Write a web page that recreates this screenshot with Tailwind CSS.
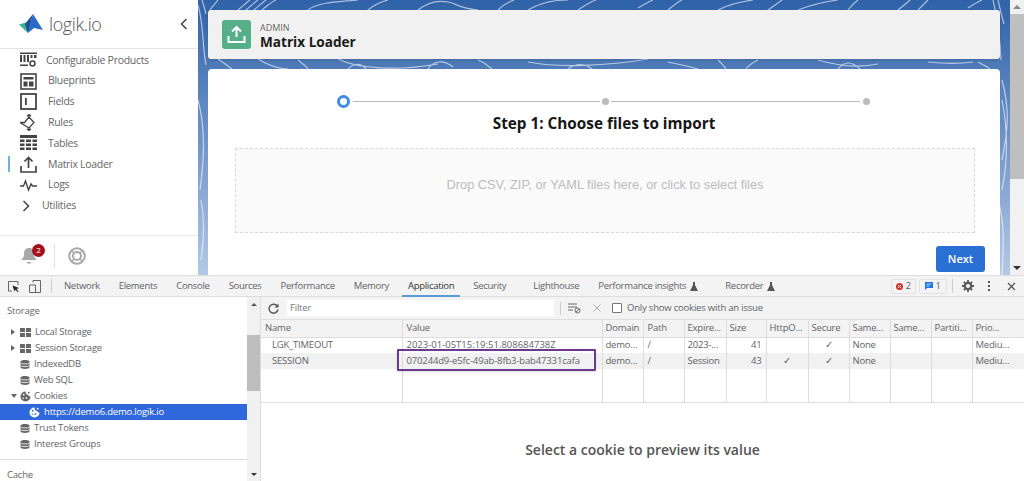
<!DOCTYPE html>
<html>
<head>
	<meta charset="utf-8">
	<title>Matrix Loader</title>
	<script src="https://cdn.jsdelivr.net/npm/@tailwindcss/browser@4"></script>
</head>
<body class="w-[1024px] h-[481px] overflow-hidden bg-white font-['Open_Sans',sans-serif]">
	<svg class="hidden">
		<symbol id="db" viewBox="0 0 10 10"><path d="M.5 2.200c0-2.300 9-2.300 9 0v5.600c0 2.300-9 2.300-9 0z" fill="#666"/><path d="M.5 3.600c1.500 1.200 7.500 1.200 9 0M.5 6.200c1.500 1.200 7.500 1.200 9 0" stroke="#fff" fill="none" stroke-width=".8"/></symbol>
		<symbol id="cookie" viewBox="0 0 12 12"><path d="M6 .5a5.500 5.500 0 1 0 5.500 5.500c-1.500.3-2.500-.5-2.700-1.800C7.300 4.200 6 3 6 .5z" fill="currentColor"/><circle cx="4" cy="4" r="1" fill="var(--hole)"/><circle cx="7" cy="7.500" r="1" fill="var(--hole)"/><circle cx="3.500" cy="8" r=".8" fill="var(--hole)"/><circle cx="9.500" cy="1.800" r="1" fill="currentColor"/></symbol>
	</svg>

	<!-- app -->
	<div class="flex h-[275px]">
		<aside class="w-[198px] shrink-0 flex flex-col bg-white">
			<div class="h-[49px] shrink-0 flex items-center pl-[19px] pr-[10px] border-b border-[#e4e4e4]">
				<svg class="w-[24px] h-[20px]" viewBox="0 0 24 20">
					<path d="M0 10.500 12 7 9 19z" fill="#35b58f"/>
					<path d="M14 0 24 16 15 14 9 19z" fill="#2a6cc9"/>
					<path d="M14 0 9 19 6 10z" fill="#1d4f96"/>
				</svg>
				<span class="ml-[6px] text-[18px] font-light text-[#555] tracking-[-0.4px]">logik.io</span>
				<svg class="ml-auto w-[8px] h-[12px]" viewBox="0 0 8 12"><path d="M6.500 1 1.500 6l5 5" fill="none" stroke="#444" stroke-width="1.500"/></svg>
			</div>
			<nav class="flex-1 relative pt-[1px] text-[10.5px] tracking-[-0.3px] text-[#666]">
				<div class="h-[20.8px] flex items-center pl-[20px]">
					<svg class="w-[17px] h-[17px] shrink-0" viewBox="0 0 17 17"><path d="M0 .5h17v1.500H0zM0 3h2v7H0zM3.500 3h2v7h-2zM7 3h2v7H7zM10.500 3h2v3h-2zM14 3h2.500v3H14zM0 12.500h8V14H0z" fill="#444"/><circle cx="12.500" cy="11.500" r="2.500" fill="none" stroke="#444" stroke-width="1.500"/></svg>
					<span class="ml-[9px]">Configurable Products</span>
				</div>
				<div class="h-[20.8px] flex items-center pl-[20px]">
					<svg class="w-[17px] h-[17px] shrink-0" viewBox="0 0 17 17"><rect x="1" y="1" width="15" height="15" fill="none" stroke="#444" stroke-width="1.600"/><path d="M3.500 4h10v2.500h-10zM3.500 8.500h4v5h-4zM9 8.500h4.500v5H9z" fill="#444"/></svg>
					<span class="ml-[11px]">Blueprints</span>
				</div>
				<div class="h-[20.8px] flex items-center pl-[20px]">
					<svg class="w-[17px] h-[17px] shrink-0" viewBox="0 0 17 17"><rect x="1" y="1" width="15" height="15" fill="none" stroke="#444" stroke-width="1.800"/><path d="M5 5h1.800v7H5z" fill="#444"/></svg>
					<span class="ml-[11px]">Fields</span>
				</div>
				<div class="h-[20.8px] flex items-center pl-[20px]">
					<svg class="w-[17px] h-[17px] shrink-0" viewBox="0 0 17 17"><path d="M0 8.500h4.500L9 3l5 5.500L9 14zM9 3V.5M7 2.200 9 .5l2 1.700M9 14v2.500M7 14.800 9 16.500l2-1.700" fill="none" stroke="#444" stroke-width="1.300"/></svg>
					<span class="ml-[11px]">Rules</span>
				</div>
				<div class="h-[20.8px] flex items-center pl-[20px]">
					<svg class="w-[17px] h-[17px] shrink-0" viewBox="0 0 17 17"><path d="M0 0h17v3H0zM0 4.500h4.500V7H0zM6 4.500h5V7H6zM12.500 4.500H17V7h-4.500zM0 8.500h4.500V11H0zM6 8.500h5V11H6zM12.500 8.500H17V11h-4.500zM0 12.500h4.500V15H0zM6 12.500h5V15H6zM12.500 12.500H17V15h-4.500z" fill="#444"/></svg>
					<span class="ml-[11px]">Tables</span>
				</div>
				<div class="h-[20.8px] flex items-center pl-[20px] relative">
					<div class="absolute left-[8px] top-[2px] w-[2px] h-[16px] bg-[#6fb1e0]"></div>
					<svg class="w-[17px] h-[17px] shrink-0" viewBox="0 0 17 17"><path d="M8.500 12V2M4.500 5.500l4-4 4 4M1 10v6h15v-6" fill="none" stroke="#444" stroke-width="1.700"/></svg>
					<span class="ml-[11px]">Matrix Loader</span>
				</div>
				<div class="h-[20.8px] flex items-center pl-[20px]">
					<svg class="w-[17px] h-[17px] shrink-0" viewBox="0 0 17 17"><path d="M0 9h3.500l2-5 3 9 2.500-6 1.500 2H17" fill="none" stroke="#444" stroke-width="1.400"/></svg>
					<span class="ml-[11px]">Logs</span>
				</div>
				<div class="h-[20.8px] flex items-center pl-[22px]">
					<svg class="w-[8px] h-[12px] shrink-0" viewBox="0 0 8 12"><path d="M1.500 1 6.500 6l-5 5" fill="none" stroke="#444" stroke-width="1.500"/></svg>
					<span class="ml-[12px]">Utilities</span>
				</div>
			</nav>
			<div class="h-[40px] shrink-0 flex items-center border-t border-[#e8e8e8] pl-[20px]">
				<div class="relative w-[18px] h-[18px]">
					<svg class="w-[18px] h-[18px]" viewBox="0 0 18 18"><path d="M9 1c3.500 0 5 2.500 5 6 0 3 1 4.500 3 6H1c2-1.500 3-3 3-6 0-3.500 1.500-6 5-6z" fill="#a9a9a9"/><path d="M7 15h4v1.500H7z" fill="#a9a9a9"/></svg>
					<div class="absolute left-[12px] top-[-3px] w-[13px] h-[13px] rounded-full bg-[#a5101f] text-white text-[8px] flex items-center justify-center">2</div>
				</div>
				<div class="ml-[16px] w-px h-[24px] bg-[#e0e0e0]"></div>
				<svg class="ml-[13px] w-[18px] h-[18px]" viewBox="0 0 18 18"><circle cx="9" cy="9" r="7.800" fill="none" stroke="#aaa" stroke-width="2"/><circle cx="9" cy="9" r="4" fill="none" stroke="#aaa" stroke-width="2"/><path d="M3.500 3.500l2.500 2.500M14.500 3.500 12 6M3.500 14.500 6 12M14.500 14.500 12 12" stroke="#aaa" stroke-width="1.500"/></svg>
			</div>
		</aside>

		<main class="relative flex-1 overflow-hidden bg-gradient-to-b from-[#2f62a8] via-[#6f93c8] to-[#b4c8e4] px-[10px] pt-[10px]">
			<svg class="absolute inset-0 w-full h-full" viewBox="0 0 812 275" fill="none" stroke="#fff" stroke-opacity=".6" stroke-width="1.200">
				<path d="M0 5c6 20 4 40 8 60M4 0c2 6 3 10 4 14M20 0c-3 4-6 7-8 10M40 10c5-4 9-8 12-10M48 10c5-4 9-8 12-10M56 10c5-4 9-8 12-10M64 10c5-4 9-8 14-10M110 10c10-8 30-8 50-10M170 10c6-5 12-8 20-10M220 10c10-8 20-10 30-8s10 6 30 8M300 10c6-6 10-8 16-10M330 10c10-6 25-10 40-10M380 10c6-4 12-8 18-10M440 8c5-3 10-6 15-8M470 10c6-5 10-8 14-10M520 10c10-5 20-8 35-10M570 10c6-4 10-7 14-10M600 10c10-4 25-8 40-10M650 10c3-4 6-7 10-10M700 10c5-4 10-8 12-10M720 10c4-4 8-8 10-10M770 8c5-4 10-6 14-8M795 0c3 15 6 20 8 60M800 0c2 8 3 14 6 24"/>
				<path d="M20 59c6 4 10 7 14 10M60 59c10 6 20 10 30 10M100 60c4 3 8 6 10 9M140 59c20 10 60 12 100 5M150 69c5-5 12-7 18 0M230 69c5-8 15-10 25-2M280 60c6 2 10 6 14 9M330 62c30 6 80 4 120-3M370 69c8-6 16-6 24 0M470 62c10 2 20 4 30 7M520 60c4 3 6 6 8 9M560 60c-8 4-10 6-12 9M620 60c20 6 40 8 60 4M640 69c6-8 14-8 22 0M730 62c20 2 30 2 45 0M780 62c8 4 12 6 20 15"/>
				<path d="M0 100c8 30 6 60 2 90M3 200c4 20 3 40 0 60M804 80c8 30 6 50 0 80M804 100c6 30 6 60 0 90M800 200c6 20 6 40 4 75"/>
			</svg>
			<div class="relative h-[49px] rounded-[3px] bg-[#f2f1f1] flex items-center pl-[14px] shadow-sm">
				<div class="w-[29px] h-[29px] rounded-[3px] bg-[#55b089] flex items-center justify-center">
					<svg class="w-[19px] h-[19px]" viewBox="0 0 19 19"><path d="M9.500 12V2.500M5 6.500l4.500-4.500 4.500 4.500M1.500 11v6h16v-6" fill="none" stroke="#fff" stroke-width="2"/></svg>
				</div>
				<div class="ml-[9px] pt-[2px]">
					<div class="text-[9px] leading-[11px] text-[#666]">ADMIN</div>
					<div class="text-[13.600px] leading-[17px] font-bold text-[#1a1a1a]">Matrix Loader</div>
				</div>
			</div>
			<div class="relative mt-[10px] h-[300px] rounded-t-[4px] bg-white">
				<div class="relative h-[64px]">
					<div class="absolute left-[129px] top-[26px] w-[13px] h-[13px] rounded-full border-[3px] border-[#3f8bea] bg-white"></div>
					<div class="absolute left-[145px] top-[32px] w-[247px] h-px bg-[#bbb]"></div>
					<div class="absolute left-[394px] top-[29px] w-[7px] h-[7px] rounded-full bg-[#bcbcbc]"></div>
					<div class="absolute left-[403px] top-[32px] w-[249px] h-px bg-[#bbb]"></div>
					<div class="absolute left-[655px] top-[29px] w-[7px] h-[7px] rounded-full bg-[#bcbcbc]"></div>
					<div class="absolute left-0 right-0 top-[43px] text-center text-[15.300px] leading-[22px] font-bold text-[#161616]">Step 1: Choose files to import</div>
				</div>
				<div class="ml-[27px] mt-[15px] w-[740px] h-[85px] pb-[12px] border border-dashed border-[#d8d8d8] bg-[#fafafa] flex items-center justify-center font-['Liberation_Sans',sans-serif] text-[12.800px] text-[#bcbcbc]">Drop CSV, ZIP, or YAML files here, or click to select files</div>
				<div class="ml-[728px] mt-[13px] w-[49px] h-[26px] rounded-[3px] bg-[#2a70d4] text-white text-[11px] font-semibold flex items-center justify-center">Next</div>
			</div>
		</main>

		<div class="w-[14px] shrink-0 bg-[#f1f1f1] flex flex-col items-center">
			<div class="h-[14px] flex items-center"><div class="w-0 h-0 border-x-[4px] border-x-transparent border-b-[4px] border-b-[#888]"></div></div>
			<div class="w-full h-[165px] bg-[#bfbfbf]"></div>
			<div class="mt-auto h-[14px] flex items-center"><div class="w-0 h-0 border-x-[4px] border-x-transparent border-t-[4px] border-t-[#333]"></div></div>
		</div>
	</div>

	<!-- devtools -->
	<div class="h-[206px] border-t border-[#ddd] text-[9.500px] tracking-[-0.2px] text-[#5f6368] flex flex-col">
		<div class="h-[21px] shrink-0 bg-[#f3f3f3] border-b border-[#ddd] flex items-center relative">
			<svg class="ml-[8px] w-[11px] h-[11px]" viewBox="0 0 11 11"><path d="M4 10H.5V.5H10V4" fill="none" stroke="#666"/><path d="M4.500 4.500 11 7 8.500 8 10.500 10.500 9.500 11 7.500 8.500 6.500 10.500z" fill="#222"/></svg>
			<svg class="ml-[10px] w-[12px] h-[13px]" viewBox="0 0 12 13"><path d="M4 2.500V.5h7.500v12H.5V5h6v7.500" fill="none" stroke="#666"/></svg>
			<div class="ml-[10px] w-px h-[14px] bg-[#ccc]"></div>
			<div class="ml-[12px] flex gap-[19px] h-full items-center pt-[1px] tracking-[-0.3px]">
				<span>Network</span><span>Elements</span><span>Console</span><span>Sources</span><span>Performance</span><span>Memory</span>
				<span class="relative h-full flex items-center text-[#333]">Application<span class="absolute left-[-6px] right-[-6px] bottom-[-1px] h-[2px] bg-[#5b9bd5]"></span></span>
				<span>Security</span><span class="ml-[8px]">Lighthouse</span>
				<span class="flex items-center gap-[4px]">Performance insights <svg class="w-[8px] h-[9px]" viewBox="0 0 8 9"><path d="M3 0h2v3l3 6H0l3-6z" fill="#555"/></svg></span>
				<span class="flex items-center gap-[4px] ml-[8px]">Recorder <svg class="w-[8px] h-[9px]" viewBox="0 0 8 9"><path d="M3 0h2v3l3 6H0l3-6z" fill="#555"/></svg></span>
			</div>
			<div class="ml-auto flex items-center pr-[8px]">
				<div class="w-[25px] h-[15px] border border-[#e2e2e2] rounded-[2px] flex items-center justify-center gap-[2px]">
					<svg class="w-[7px] h-[7px]" viewBox="0 0 7 7"><circle cx="3.500" cy="3.500" r="3.500" fill="#d93025"/><path d="M2 2l3 3M5 2 2 5" stroke="#fff" stroke-width=".9"/></svg>
					<span>2</span>
				</div>
				<div class="ml-[3px] w-[28px] h-[15px] border border-[#e2e2e2] rounded-[2px] flex items-center justify-center gap-[2px]">
					<svg class="w-[8px] h-[8px]" viewBox="0 0 8 8"><path d="M0 0h8v6H2L0 8z" fill="#1a73e8"/><path d="M1.500 2h5M1.500 4h3" stroke="#fff" stroke-width=".7"/></svg>
					<span>1</span>
				</div>
				<div class="ml-[5px] w-px h-[14px] bg-[#ccc]"></div>
				<svg class="ml-[9px] w-[12px] h-[12px]" viewBox="0 0 12 12"><circle cx="6" cy="6" r="3.200" fill="none" stroke="#5a5a5a" stroke-width="2.200"/><path d="M6 0v2.500M6 9.500V12M0 6h2.500M9.500 6H12M1.800 1.800l1.800 1.800M8.400 8.400l1.800 1.800M10.200 1.800 8.400 3.600M3.600 8.400l-1.800 1.800" stroke="#5a5a5a" stroke-width="1.800"/></svg>
				<div class="ml-[14px] flex flex-col gap-[2px]"><div class="w-[2px] h-[2px] bg-[#555]"></div><div class="w-[2px] h-[2px] bg-[#555]"></div><div class="w-[2px] h-[2px] bg-[#555]"></div></div>
				<svg class="ml-[17px] w-[9px] h-[9px]" viewBox="0 0 9 9"><path d="M1 1l7 7M8 1 1 8" stroke="#555" stroke-width="1.300"/></svg>
			</div>
		</div>
		<div class="flex-1 flex min-h-0">
			<div class="w-[247px] shrink-0 flex flex-col overflow-hidden">
				<div class="h-[23px] shrink-0 pl-[7px] flex items-end pb-[2px] text-[#666]">Storage</div>
				<div class="mt-[4px] shrink-0">
					<div class="h-[16px] flex items-center pl-[11px]"><div class="w-0 h-0 border-y-[3px] border-y-transparent border-l-[4px] border-l-[#666]"></div><div class="ml-[5px] w-[11px] h-[9px] grid grid-cols-2 gap-[1px]"><i class="bg-[#666]"></i><i class="bg-[#666]"></i><i class="bg-[#666]"></i><i class="bg-[#666]"></i></div><span class="ml-[4px]">Local Storage</span></div>
					<div class="h-[16px] flex items-center pl-[11px]"><div class="w-0 h-0 border-y-[3px] border-y-transparent border-l-[4px] border-l-[#666]"></div><div class="ml-[5px] w-[11px] h-[9px] grid grid-cols-2 gap-[1px]"><i class="bg-[#666]"></i><i class="bg-[#666]"></i><i class="bg-[#666]"></i><i class="bg-[#666]"></i></div><span class="ml-[4px]">Session Storage</span></div>
					<div class="h-[16px] flex items-center pl-[20px]"><svg class="w-[10px] h-[11px]"><use href="#db"/></svg><span class="ml-[4px]">IndexedDB</span></div>
					<div class="h-[16px] flex items-center pl-[20px]"><svg class="w-[10px] h-[11px]"><use href="#db"/></svg><span class="ml-[4px]">Web SQL</span></div>
					<div class="h-[16px] flex items-center pl-[11px] text-[#666] [--hole:#fff]"><div class="w-0 h-0 border-x-[3px] border-x-transparent border-t-[4px] border-t-[#666]"></div><svg class="ml-[3px] w-[11px] h-[11px]"><use href="#cookie"/></svg><span class="ml-[3px] text-[#5f6368]">Cookies</span></div>
					<div class="h-[16px] flex items-center pl-[29px] bg-[#2f68dc] text-white [--hole:#2f68dc]"><svg class="w-[11px] h-[11px]"><use href="#cookie"/></svg><span class="ml-[4px]">https://demo6.demo.logik.io</span></div>
					<div class="h-[16px] flex items-center pl-[20px]"><svg class="w-[10px] h-[11px]"><use href="#db"/></svg><span class="ml-[4px]">Trust Tokens</span></div>
					<div class="h-[16px] flex items-center pl-[20px]"><svg class="w-[10px] h-[11px]"><use href="#db"/></svg><span class="ml-[4px]">Interest Groups</span></div>
				</div>
				<div class="mt-[7px] shrink-0 border-t border-[#ddd] pl-[7px] pt-[8px] text-[#666]">Cache</div>
			</div>
			<div class="w-[14px] shrink-0 bg-[#f1f1f1] flex flex-col items-center border-r border-[#ddd]">
				<div class="h-[14px] flex items-center"><div class="w-0 h-0 border-x-[3px] border-x-transparent border-b-[3px] border-b-[#555]"></div></div>
				<div class="mt-[24px] w-full h-[56px] bg-[#bdbdbd]"></div>
				<div class="mt-auto h-[14px] flex items-center"><div class="w-0 h-0 border-x-[3px] border-x-transparent border-t-[3px] border-t-[#333]"></div></div>
			</div>
			<div class="flex-1 min-w-0 flex flex-col">
				<div class="h-[23px] shrink-0 bg-[#f3f3f3] border-b border-[#ddd] flex items-center">
					<svg class="ml-[7px] w-[11px] h-[11px]" viewBox="0 0 11 11"><path d="M9.500 3.500A4.500 4.500 0 1 0 10 6.500" fill="none" stroke="#555" stroke-width="1.400"/><path d="M10.500 .5v4h-4z" fill="#555"/></svg>
					<div class="ml-[8px] w-[267px] h-[16px] bg-white flex items-center pl-[3px] text-[#777]">Filter</div>
					<div class="ml-[6px] w-px h-[13px] bg-[#ccc]"></div>
					<svg class="ml-[7px] w-[13px] h-[11px]" viewBox="0 0 13 11"><path d="M0 1h9M0 4h9M0 7h5" stroke="#666" stroke-width="1.200"/><circle cx="9.500" cy="7.500" r="2.500" fill="none" stroke="#666"/><path d="M8 9l3-3" stroke="#666"/></svg>
					<svg class="ml-[12px] w-[8px] h-[8px]" viewBox="0 0 8 8"><path d="M.5.5l7 7M7.500.5l-7 7" stroke="#aaa"/></svg>
					<div class="ml-[11px] w-[10px] h-[10px] border border-[#777] rounded-[1px] bg-white"></div>
					<span class="ml-[5px]">Only show cookies with an issue</span>
				</div>
				<div class="h-[83px] shrink-0 border-b border-[#ddd] relative">
					<table class="table-fixed w-full h-full border-collapse text-left">
						<colgroup><col class="w-[141px]"><col class="w-[200px]"><col class="w-[41px]"><col class="w-[41px]"><col class="w-[42px]"><col class="w-[40px]"><col class="w-[42px]"><col class="w-[41px]"><col class="w-[41px]"><col class="w-[41px]"><col class="w-[41px]"><col></colgroup>
						<tr class="h-[17px] bg-[#f3f3f3] border-b border-[#ddd]">
							<th class="font-normal px-[4px] border-r border-[#ddd]">Name</th><th class="font-normal px-[4px] border-r border-[#ddd]">Value</th><th class="font-normal px-[3px] border-r border-[#ddd]">Domain</th><th class="font-normal px-[4px] border-r border-[#ddd]">Path</th><th class="font-normal px-[3px] border-r border-[#ddd]">Expire...</th><th class="font-normal px-[3px] border-r border-[#ddd]">Size</th><th class="font-normal px-[3px] border-r border-[#ddd]">HttpO...</th><th class="font-normal px-[3px] border-r border-[#ddd]">Secure</th><th class="font-normal px-[3px] border-r border-[#ddd]">Same...</th><th class="font-normal px-[3px] border-r border-[#ddd]">Same...</th><th class="font-normal px-[3px] border-r border-[#ddd]">Partiti...</th><th class="font-normal px-[3px]">Prio...</th>
						</tr>
						<tr class="h-[16px]">
							<td class="pl-[11px] border-r border-[#ddd]">LGK_TIMEOUT</td><td class="px-[4px] border-r border-[#ddd] whitespace-nowrap tracking-normal">2023-01-05T15:19:51.808684738Z</td><td class="px-[3px] border-r border-[#ddd]">demo...</td><td class="px-[4px] border-r border-[#ddd]">/</td><td class="px-[3px] border-r border-[#ddd]">2023-...</td><td class="px-[4px] border-r border-[#ddd] text-right">41</td><td class="border-r border-[#ddd]"></td><td class="text-center border-r border-[#ddd]">✓</td><td class="px-[3px] border-r border-[#ddd]">None</td><td class="border-r border-[#ddd]"></td><td class="border-r border-[#ddd]"></td><td class="px-[3px]">Mediu...</td>
						</tr>
						<tr class="h-[16px] bg-[#f1f1f1]">
							<td class="pl-[11px] border-r border-[#ddd]">SESSION</td><td class="px-[4px] border-r border-[#ddd] whitespace-nowrap tracking-[-0.15px]">070244d9-e5fc-49ab-8fb3-bab47331cafa</td><td class="px-[3px] border-r border-[#ddd]">demo...</td><td class="px-[4px] border-r border-[#ddd]">/</td><td class="px-[3px] border-r border-[#ddd]">Session</td><td class="px-[4px] border-r border-[#ddd] text-right">43</td><td class="text-center border-r border-[#ddd]">✓</td><td class="text-center border-r border-[#ddd]">✓</td><td class="px-[3px] border-r border-[#ddd]">None</td><td class="border-r border-[#ddd]"></td><td class="border-r border-[#ddd]"></td><td class="px-[3px]">Mediu...</td>
						</tr>
						<tr>
							<td class="border-r border-[#ddd]"></td><td class="border-r border-[#ddd]"></td><td class="border-r border-[#ddd]"></td><td class="border-r border-[#ddd]"></td><td class="border-r border-[#ddd]"></td><td class="border-r border-[#ddd]"></td><td class="border-r border-[#ddd]"></td><td class="border-r border-[#ddd]"></td><td class="border-r border-[#ddd]"></td><td class="border-r border-[#ddd]"></td><td class="border-r border-[#ddd]"></td><td></td>
						</tr>
					</table>
					<div class="absolute left-[136px] top-[29px] w-[199px] h-[22px] border-2 border-[#6b3a8e] rounded-[1px] shadow-sm"></div>
				</div>
				<div class="flex-1 flex items-center justify-center text-[14px] tracking-normal font-semibold text-[#555] pt-[14px]">Select a cookie to preview its value</div>
			</div>
		</div>
	</div>
</body>
</html>
